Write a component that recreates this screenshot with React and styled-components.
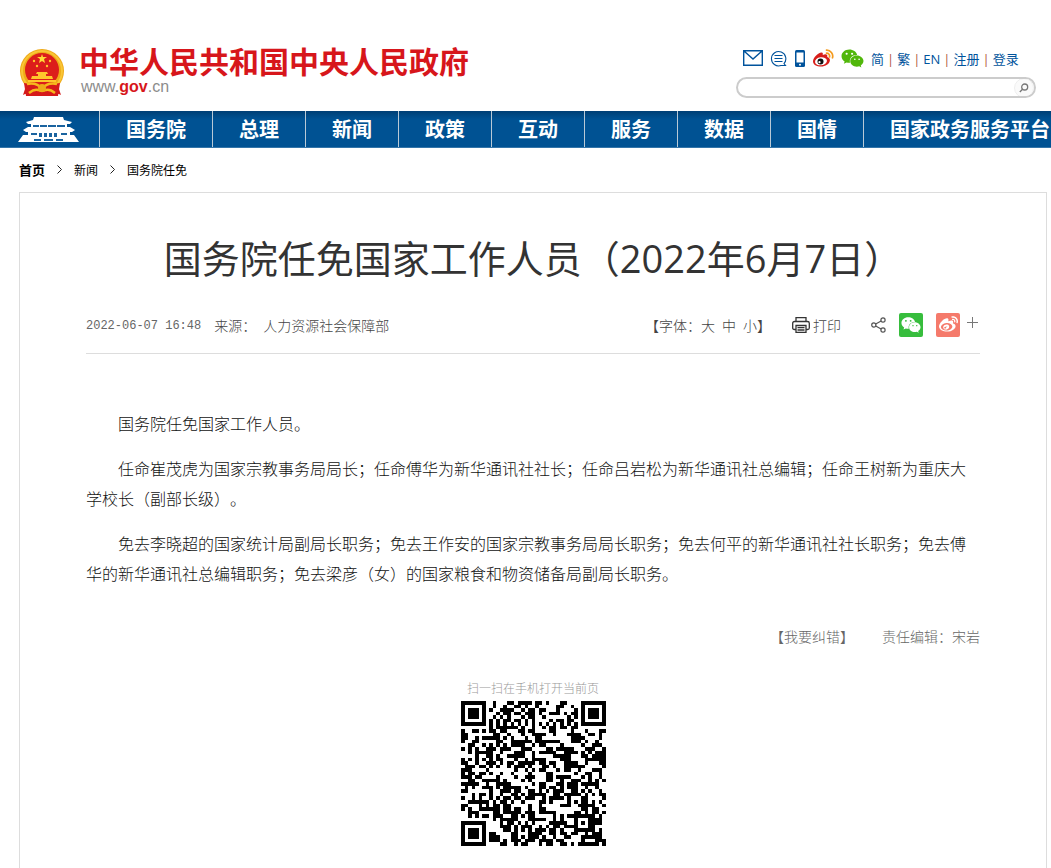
import React from "react";
import styled, { createGlobalStyle } from "styled-components";
import { FaWeibo, FaWeixin } from "react-icons/fa";

const GlobalStyle = createGlobalStyle`
  * {
    box-sizing: border-box;
  }
  body {
    margin: 0;
    overflow-x: hidden;
    background: #fff;
    color: #333;
    font-family: "Noto Sans CJK SC", sans-serif;
    text-spacing-trim: space-all;
  }
  a {
    color: inherit;
    text-decoration: none;
  }
  button {
    padding: 0;
    border: 0;
    background: none;
    color: inherit;
    font: inherit;
    cursor: pointer;
  }
  svg {
    display: block;
    flex-shrink: 0;
  }
`;

//
// ** Header **
//

const Header = styled.header`
  display: flex;
  align-items: flex-end;
  justify-content: space-between;
  padding: 43px 15px 13px 19px;
`;

const Brand = styled.a`
  display: flex;
  align-items: flex-end;
  gap: 14px;
`;

const BrandText = styled.div`
  padding-bottom: 2px;
`;

const BrandName = styled.div`
  color: #d7161b;
  font-size: 30px;
  font-weight: 700;
  line-height: 35px;
  white-space: nowrap;
`;

const BrandUrl = styled.div`
  padding-left: 2px;
  color: #8c8c8c;
  font-family: "Liberation Sans", sans-serif;
  font-size: 16px;
  line-height: 18px;

  b {
    color: #d7161b;
  }
`;

const Tools = styled.div`
  display: flex;
  flex-direction: column;
  gap: 7px;
  width: 300px;
`;

const ToolRow = styled.div`
  display: flex;
  align-items: center;
  gap: 7px;
  height: 24px;
  padding-left: 7px;
`;

const LangLinks = styled.div`
  display: flex;
  gap: 3px;
  padding-top: 2px;
  color: #00539c;
  font-family: "Open Sans", "Noto Sans CJK SC", sans-serif;
  font-size: 13px;
  line-height: 20px;
  white-space: nowrap;

  span {
    color: #b0563c;
  }
`;

const Search = styled.form`
  display: flex;
  align-items: center;
  height: 21px;
  border: 2px solid #ccc;
  border-radius: 11px;
  overflow: hidden;

  input {
    flex: 1;
    min-width: 0;
    padding: 0 10px;
    border: 0;
    outline: 0;
    background: none;
    font-size: 12px;
  }

  button {
    display: flex;
    align-items: center;
    justify-content: center;
    width: 20px;
    height: 20px;
    border: 1px solid #eee;
    border-radius: 50%;
    background: #fafafa;
  }
`;

//
// ** Navigation **
//

const Nav = styled.nav`
  display: flex;
  height: 37px;
  overflow: hidden;
  background: linear-gradient(#003f75, #005293 8px);
  border-bottom: 1px solid #3475a9;
`;

const NavItem = styled.a`
  flex-shrink: 0;
  padding: 0 26px;
  border-right: 1px solid ${({ $last }) => ($last ? "transparent" : "#b9c9d6")};
  color: #fff;
  font-size: 20px;
  font-weight: 700;
  line-height: 36px;
  white-space: nowrap;
`;

const HomeItem = styled(NavItem)`
  padding: 5px 20px 0 18px;
`;

const Crumbs = styled.nav`
  display: flex;
  align-items: center;
  gap: 11px;
  height: 44px;
  padding: 0 0 2px 19px;
  color: #000;
  font-size: 12px;

  a:first-child {
    font-size: 13px;
    font-weight: 700;
  }
`;

//
// ** Article **
//

const Article = styled.article`
  margin: 0 4px 0 19px;
  padding: 40px 66px;
  border: 1px solid #ddd;
`;

const Title = styled.h1`
  margin: 0;
  color: #333;
  font-family: "Open Sans", "Noto Sans CJK SC", sans-serif;
  font-size: 38px;
  font-weight: 400;
  line-height: 50px;
  text-align: center;
`;

const Meta = styled.div`
  display: flex;
  align-items: center;
  height: 57px;
  margin-top: 14px;
  padding-bottom: 1px;
  border-bottom: 1px solid #ddd;
  color: #444;
  font-size: 14px;
  font-weight: 300;
  white-space: nowrap;
`;

const Time = styled.time`
  padding-top: 2px;
  color: #666;
  font-family: "Liberation Mono", monospace;
  font-size: 12px;
`;

const Source = styled.div`
  display: flex;
  gap: 7px;
  margin-left: 13px;
`;

const FontSize = styled.div`
  display: flex;
  gap: 7px;
  margin-left: auto;
`;

const Print = styled.button`
  display: flex;
  align-items: center;
  gap: 3px;
  && {
    margin: 0 30px 0 21px;
  }
`;

const ShareList = styled.div`
  display: flex;
  align-items: center;
  gap: 13px;
`;

const ShareButton = styled.button`
  && {
    display: flex;
    align-items: center;
    justify-content: center;
    width: 24px;
    height: 24px;
    border-radius: 2px;
    background: ${({ $color }) => $color};
    color: #fff;
  }
`;

const More = styled.button`
  && {
    margin: 0 2px 4px 7px;
  }
`;

const Body = styled.div`
  padding-top: 54px;
  color: #111;
  font-size: 16px;
  font-weight: 300;
  line-height: 30px;

  p {
    margin: 0 0 15px;
    text-indent: 2em;
  }
`;

const Editor = styled.div`
  display: flex;
  justify-content: flex-end;
  gap: 28px;
  margin-top: 38px;
  color: #666;
  font-size: 14px;
  font-weight: 300;
  line-height: 20px;
`;

const Scan = styled.div`
  display: flex;
  flex-direction: column;
  align-items: center;
  margin-top: 32px;
  color: #999;
  font-size: 12px;
  font-weight: 300;
  line-height: 20px;

  svg {
    margin-top: 3px;
  }
`;

//
// drawings
//

const Emblem = () => (
  <svg width="46" height="52" viewBox="0 0 46 52">
    <path d="M9 34 L4 49 Q9 46 12 50 H34 Q37 46 42 49 L37 34z" fill="#d51a1a" />
    <circle cx="23" cy="25" r="22" fill="#efaa18" />
    <circle cx="23" cy="25" r="20" fill="none" stroke="#f9c636" strokeWidth="2" />
    <circle cx="23" cy="24" r="17" fill="#dc1d1b" />
    <path d="M23 8l1 3h4l-3 2 1 4-3-2-3 2 1-4-3-2h4z" fill="#ffdc38" />
    <g fill="#ffc62c">
      <circle cx="15" cy="15" r="1.2" />
      <circle cx="31" cy="15" r="1.2" />
      <circle cx="18" cy="20" r="1.2" />
      <circle cx="28" cy="20" r="1.2" />
      <path d="M18 26h10l1 2h-2v2h6l1 3H12l1-3h6v-2h-2zM9 34h28v2H9z" />
    </g>
    <path d="M5 37l14 2 4-2 4 2 14-2-2 13H7z" fill="#d51a1a" />
    <path d="M8 38q10-2 15 5 5-7 15-5M10 47q5-4 9-3 4 2 8 0 4-1 9 3" fill="none" stroke="#f6b91c" strokeWidth="2.4" />
    <circle cx="23" cy="42" r="4" fill="#efaa18" />
  </svg>
);

const Gate = () => (
  <svg width="61" height="27" viewBox="0 0 61 27">
    <g fill="#fff">
      <path d="M16 1h29l1 3 8 2-2 2H10L8 6l7-2z" />
      <path d="M13 8h36v7H13z" />
      <path d="M10 11h42l5 3-3 2H8l-3-2z" />
      <path d="M10 16h42v6H10z" />
      <path d="M5 19h8v3h36v-3h7l5 7H0z" />
    </g>
    <path
      d="M15 9h6v2h-6zM22 9h7v2h-7zM30 9h8v2h-8zM39 9h8v2h-8zM13 17h6v2h-6zM21 17h3v4h-3zM26 17h3v4h-3zM31 17h3v4h-3zM36 17h3v4h-3zM43 17h6v2h-6zM16 23h7v2h-7zM26 23h9v2h-9zM38 23h7v2h-7z"
      fill="#1a639f"
    />
  </svg>
);

const Mail = () => (
  <svg width="20" height="16" viewBox="0 0 20 16" fill="none" stroke="#00539c" strokeWidth="1.4">
    <path d="M.7.7h18.6v14.6H.7zM1 1l9 8 9-8" />
  </svg>
);

const Chat = () => (
  <svg width="17" height="17" viewBox="0 0 17 17" fill="none" stroke="#00539c" strokeWidth="1.1">
    <path d="M14 13.5A7.2 7.2 0 1 0 11 15.500h4.500zM4.500 5.500h8M4.500 8.500h8M4.500 11.500h8" />
  </svg>
);

const Phone = () => (
  <svg width="12" height="17" viewBox="0 0 12 17">
    <rect x="1" y="0" width="10" height="17" rx="1.5" fill="#00539c" />
    <path d="M2.500 2.500h7v10h-7z" fill="#fff" />
    <circle cx="6" cy="14.700" r="1" fill="#fff" />
  </svg>
);

const WeiboColor = () => (
  <svg width="21" height="18" viewBox="0 0 21 18">
    <path
      d="M8.5 3.5c1.700 0 1.500 1.700 1.200 2.500 3-1.300 5.300-.8 4.500 2 1.600.5 3 1.500 2.700 3.500C16.400 15 12.500 17.500 8 17.500S0 15.500 0 12.500C0 9 5 3.500 8.500 3.500z"
      fill="#d81e1a"
    />
    <ellipse cx="8" cy="12.300" rx="6" ry="4" fill="#fff" transform="rotate(-8 8 12.300)" />
    <circle cx="7.500" cy="12.500" r="3" fill="#111" />
    <circle cx="6.500" cy="13.200" r="1.100" fill="#fff" />
    <path d="M13.500 1.200a6 6 0 0 1 6 7.600M13.500 4.200a3 3 0 0 1 3 3.800" fill="none" stroke="#f49a1c" strokeWidth="1.700" strokeLinecap="round" />
  </svg>
);

const Magnifier = () => (
  <svg width="10" height="10" viewBox="0 0 10 10" fill="none" stroke="#777" strokeWidth="1.3">
    <circle cx="5.700" cy="4" r="3" />
    <path d="M3.500 6.200L.8 9" />
  </svg>
);

const Chevron = () => (
  <svg width="7" height="9" viewBox="0 0 7 9" fill="none" stroke="#222">
    <path d="M1.500.5l4 4-4 4" />
  </svg>
);

const Printer = () => (
  <svg width="18" height="16" viewBox="0 0 18 16" fill="none" stroke="#333" strokeWidth="1.300">
    <path d="M4 4.500V.7h10v3.800M4 12.500H2.500Q.7 12.500.7 11V6.200q0-1.700 1.800-1.700h13q1.800 0 1.800 1.700V11q0 1.500-1.800 1.500H14" />
    <path d="M4 8.500h10v6.800H4zM5.500 10.700h7M5.500 13h7" />
  </svg>
);

const Share = () => (
  <svg width="15" height="16" viewBox="0 0 15 16" fill="none" stroke="#555" strokeWidth="1.200">
    <circle cx="2.800" cy="8" r="2.100" />
    <circle cx="12" cy="3" r="2.100" />
    <circle cx="12" cy="13" r="2.100" />
    <path d="M4.700 7l5.400-3M4.700 9l5.400 3" />
  </svg>
);

const Plus = () => (
  <svg width="11" height="11" viewBox="0 0 11 11" stroke="#777">
    <path d="M5.500 0v11M0 5.500h11" />
  </svg>
);

const QR_SIZE = 41;

const inFinder = (x, y) =>
  (x < 8 && y < 8) || (x > QR_SIZE - 9 && y < 8) || (x < 8 && y > QR_SIZE - 9);

const ring = (dx, dy) => Math.max(Math.abs(dx), Math.abs(dy));

const isDark = (x, y) => {
  if (inFinder(x, y)) {
    const cx = x < 8 ? 3 : QR_SIZE - 4;
    const cy = y < 8 ? 3 : QR_SIZE - 4;
    const r = ring(x - cx, y - cy);
    return r < 2 || r === 3;
  }
  if (ring(x - 34, y - 34) < 3) return ring(x - 34, y - 34) !== 1;
  if (x === 6 || y === 6) return (x + y) % 2 === 0;
  let h = (x * 374761393 + y * 668265263) | 0;
  h = Math.imul(h ^ (h >>> 13), 1274126177);
  return ((h ^ (h >>> 16)) & 255) < 132;
};

const QrCode = () => {
  let d = "";
  for (let y = 0; y < QR_SIZE; y++) {
    for (let x = 0; x < QR_SIZE; x++) {
      if (isDark(x, y)) d += `M${x} ${y}h1v1h-1z`;
    }
  }
  return (
    <svg width="145" height="145" viewBox={`0 0 ${QR_SIZE} ${QR_SIZE}`} shapeRendering="crispEdges">
      <path d={d} fill="#000" />
    </svg>
  );
};

//
//
//
const menu = ["国务院", "总理", "新闻", "政策", "互动", "服务", "数据", "国情", "国家政务服务平台"];
const links = ["简", "繁", "EN", "注册", "登录"];

const App = () => {
  return (
    <>
      <GlobalStyle />
      <Header>
        <Brand href="#">
          <Emblem />
          <BrandText>
            <BrandName>中华人民共和国中央人民政府</BrandName>
            <BrandUrl>
              www.<b>gov</b>.cn
            </BrandUrl>
          </BrandText>
        </Brand>
        <Tools>
          <ToolRow>
            <a href="#" aria-label="邮箱"><Mail /></a>
            <a href="#" aria-label="留言"><Chat /></a>
            <a href="#" aria-label="客户端"><Phone /></a>
            <a href="#" aria-label="微博"><WeiboColor /></a>
            <a href="#" aria-label="微信"><FaWeixin size={23} color="#51b70b" /></a>
            <LangLinks>
              {links.map((text, i) => (
                <React.Fragment key={text}>
                  {i > 0 && <span>|</span>}
                  <a href="#">{text}</a>
                </React.Fragment>
              ))}
            </LangLinks>
          </ToolRow>
          <Search>
            <input type="text" aria-label="搜索" />
            <button type="button" aria-label="搜索"><Magnifier /></button>
          </Search>
        </Tools>
      </Header>

      <Nav>
        <HomeItem href="#" aria-label="首页"><Gate /></HomeItem>
        {menu.map((text, i) => (
          <NavItem href="#" key={text} $last={i === menu.length - 1}>
            {text}
          </NavItem>
        ))}
      </Nav>

      <Crumbs>
        <a href="#">首页</a>
        <Chevron />
        <a href="#">新闻</a>
        <Chevron />
        <a href="#">国务院任免</a>
      </Crumbs>

      <Article>
        <Title>国务院任免国家工作人员（2022年6月7日）</Title>
        <Meta>
          <Time>2022-06-07 16:48</Time>
          <Source>
            <span>来源：</span>
            <span>人力资源社会保障部</span>
          </Source>
          <FontSize>
            <span>【字体：<button type="button">大</button></span>
            <button type="button">中</button>
            <span><button type="button">小</button>】</span>
          </FontSize>
          <Print type="button">
            <Printer />
            打印
          </Print>
          <ShareList>
            <Share />
            <ShareButton type="button" $color="#37bd3d" aria-label="微信">
              <FaWeixin size={20} />
            </ShareButton>
            <ShareButton type="button" $color="#f57a6b" aria-label="微博">
              <FaWeibo size={19} />
            </ShareButton>
          </ShareList>
          <More type="button" aria-label="更多"><Plus /></More>
        </Meta>

        <Body>
          <p>国务院任免国家工作人员。</p>
          <p>
            任命崔茂虎为国家宗教事务局局长；任命傅华为新华通讯社社长；任命吕岩松为新华通讯社总编辑；任命王树新为重庆大学校长（副部长级）。
          </p>
          <p>
            免去李晓超的国家统计局副局长职务；免去王作安的国家宗教事务局局长职务；免去何平的新华通讯社社长职务；免去傅华的新华通讯社总编辑职务；免去梁彦（女）的国家粮食和物资储备局副局长职务。
          </p>
        </Body>

        <Editor>
          <button type="button">【我要纠错】</button>
          <span>责任编辑：宋岩</span>
        </Editor>

        <Scan>
          扫一扫在手机打开当前页
          <QrCode />
        </Scan>
      </Article>
    </>
  );
};

export default App;
